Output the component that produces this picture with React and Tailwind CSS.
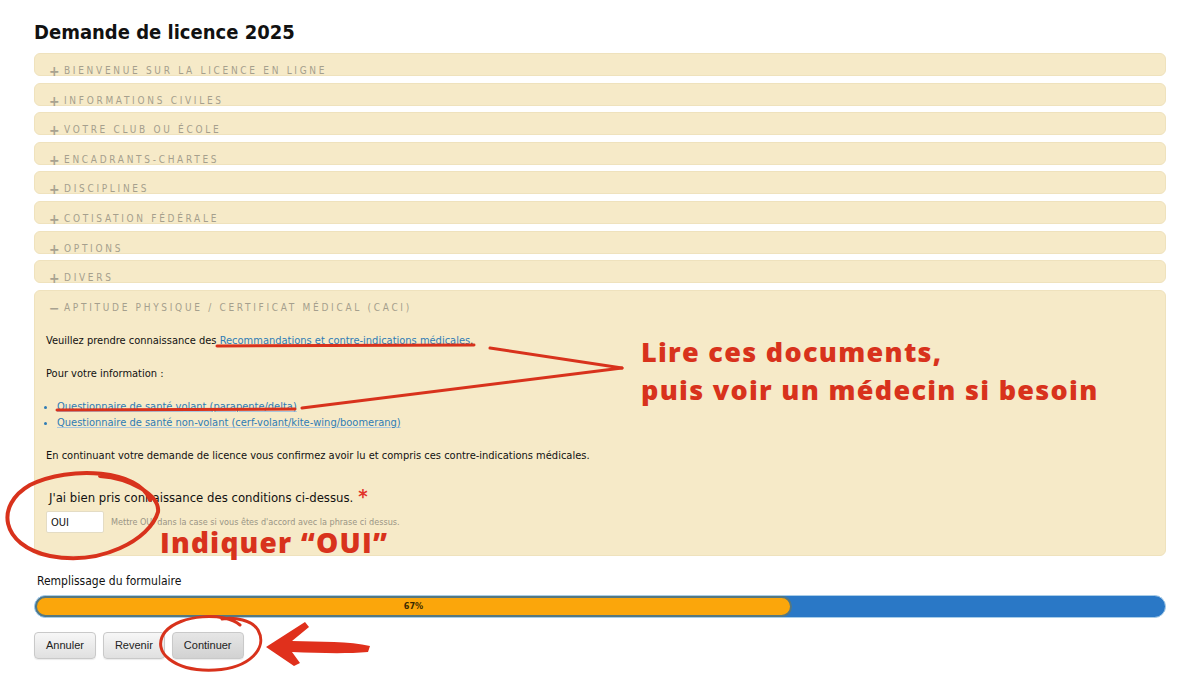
import React from 'react';

const sections = [
  'Bienvenue sur la licence en ligne',
  'Informations civiles',
  'Votre club ou école',
  'Encadrants-chartes',
  'Disciplines',
  'Cotisation fédérale',
  'Options',
  'Divers',
];

function Row({ label, open }) {
  return (
    <div className="flex items-center gap-[6px] pl-[14px] text-[10px] leading-none tracking-[0.27em] uppercase text-[#a59f8d]">
      <span className="text-[14px] font-bold tracking-normal text-[#a8a290] w-[9px]">{open ? '−' : '+'}</span>
      <span>{label}</span>
    </div>
  );
}

function Button({ children, active }) {
  return (
    <button
      className={`h-[27px] px-[11px] rounded-[4px] border border-[#c9c9c9] text-[11px] text-[#222] font-['Liberation_Sans',sans-serif] shadow-[0_1px_1px_rgba(0,0,0,0.08)] ${
        active ? 'bg-gradient-to-b from-[#e6e6e6] to-[#d2d2d2]' : 'bg-gradient-to-b from-[#f7f7f7] to-[#e0e0e0]'
      }`}
    >
      {children}
    </button>
  );
}

export default function App() {
  return (
    <div className="relative w-[1200px] h-[677px] bg-white overflow-hidden font-['DejaVu_Sans_Condensed','DejaVu_Sans',sans-serif] text-[#111]">
      <div className="w-[1200px] px-[34px] pt-[20px]">
        <h1 className="text-[20px] leading-[24px] font-bold">Demande de licence 2025</h1>

        <div className="mt-[9px] flex flex-col gap-[6.6px]">
          {sections.map((s) => (
            <div key={s} className="h-[23px] pt-[10px] rounded-[6px] bg-[#f6eac8] border border-[#efe2bd]">
              <Row label={s} />
            </div>
          ))}
        </div>

        <div className="mt-[7px] rounded-[6px] bg-[#f6eac8] border border-[#efe2bd] pt-[11px] pb-[22px]">
          <div className="h-[12px] flex items-center">
            <Row label="Aptitude physique / certificat médical (CACI)" open />
          </div>
          <div className="px-[11px] text-[11px] leading-[16px]">
            <p className="mt-[19px]">
              Veuillez prendre connaissance des{' '}
              <span className="text-[#2f7cb5]">Recommandations et contre-indications médicales</span>.
            </p>
            <p className="mt-[17px]">Pour votre information :</p>
            <ul className="mt-[17px] list-disc pl-[11px] text-[#2f7cb5]">
              <li className="underline decoration-[#a9c6dc]">Questionnaire de santé volant (parapente/delta)</li>
              <li className="underline decoration-[#a9c6dc]">Questionnaire de santé non-volant (cerf-volant/kite-wing/boomerang)</li>
            </ul>
            <p className="mt-[17px]">En continuant votre demande de licence vous confirmez avoir lu et compris ces contre-indications médicales.</p>
            <div className="mt-[25px] pl-[3px] text-[13px] leading-[18px] flex items-start">
              <span>J'ai bien pris connaissance des conditions ci-dessus.</span>
              <span className="ml-[5px] text-[#e2342a] text-[20px] leading-[14px] font-bold">*</span>
            </div>
            <div className="mt-[4px] flex items-center gap-[7px]">
              <div className="w-[58px] h-[22px] bg-white border border-[#e4dcc4] rounded-[2px] px-[4px] text-[11px] leading-[22px]">OUI</div>
              <span className="text-[9px] text-[#9a9585]">Mettre OUI dans la case si vous êtes d'accord avec la phrase ci dessus.</span>
            </div>
          </div>
        </div>

        <p className="mt-[17px] pl-[3px] text-[12px] leading-[16px]">Remplissage du formulaire</p>
        <div className="mt-[6px] h-[23px] rounded-full bg-[#2a78c6] border border-[#a8cde8] overflow-hidden flex">
          <div className="w-[67%] h-full rounded-full bg-[#fba60b] border-2 border-[#56787f] flex items-center justify-center text-[9px] font-bold text-[#3a2a00]">
            67%
          </div>
        </div>

        <div className="mt-[14px] flex gap-[7px]">
          <Button>Annuler</Button>
          <Button>Revenir</Button>
          <Button active>Continuer</Button>
        </div>
      </div>

      {/* annotations */}
      <svg className="absolute inset-0 pointer-events-none" width="1200" height="677" viewBox="0 0 1200 677">
        <g stroke="#d8321c" strokeLinecap="round" fill="none">
          <path d="M217 346 L474 345" strokeWidth="3" />
          <path d="M57 410 L295 409" strokeWidth="3" />
          <path d="M490 348 L622 368" strokeWidth="3" />
          <path d="M302 408 L622 368" strokeWidth="3" />
          <path d="M150 500 C 140 470, 70 465, 30 485 C -5 505, 0 545, 50 556 C 100 566, 150 540, 158 512 C 160 495, 130 478, 100 476" strokeWidth="4" />
          <path d="M240 625 C 225 612, 180 614, 165 632 C 150 652, 175 672, 215 670 C 250 668, 268 648, 258 630 C 252 620, 235 617, 222 619" strokeWidth="3" />
        </g>
        <path
          d="M266 647 L305 622 L309 627 L292 641 C 320 642, 350 641, 370 646 L 368 652 C 345 654, 318 653, 292 652 L 300 663 L 294 666 Z"
          fill="#e0301c"
        />
      </svg>
      <div className="absolute left-[641px] top-[333px] text-[#d8321c] font-['Open_Sans',sans-serif] font-extrabold text-[27px] leading-[38px] tracking-[1.3px]">
        <div>Lire ces documents,</div>
        <div>puis voir un médecin si besoin</div>
      </div>
      <div className="absolute left-[160px] top-[528px] text-[#d8321c] font-['Open_Sans',sans-serif] font-extrabold text-[28px] leading-[28px] tracking-[1.2px]">
        Indiquer “OUI”
      </div>
    </div>
  );
}
